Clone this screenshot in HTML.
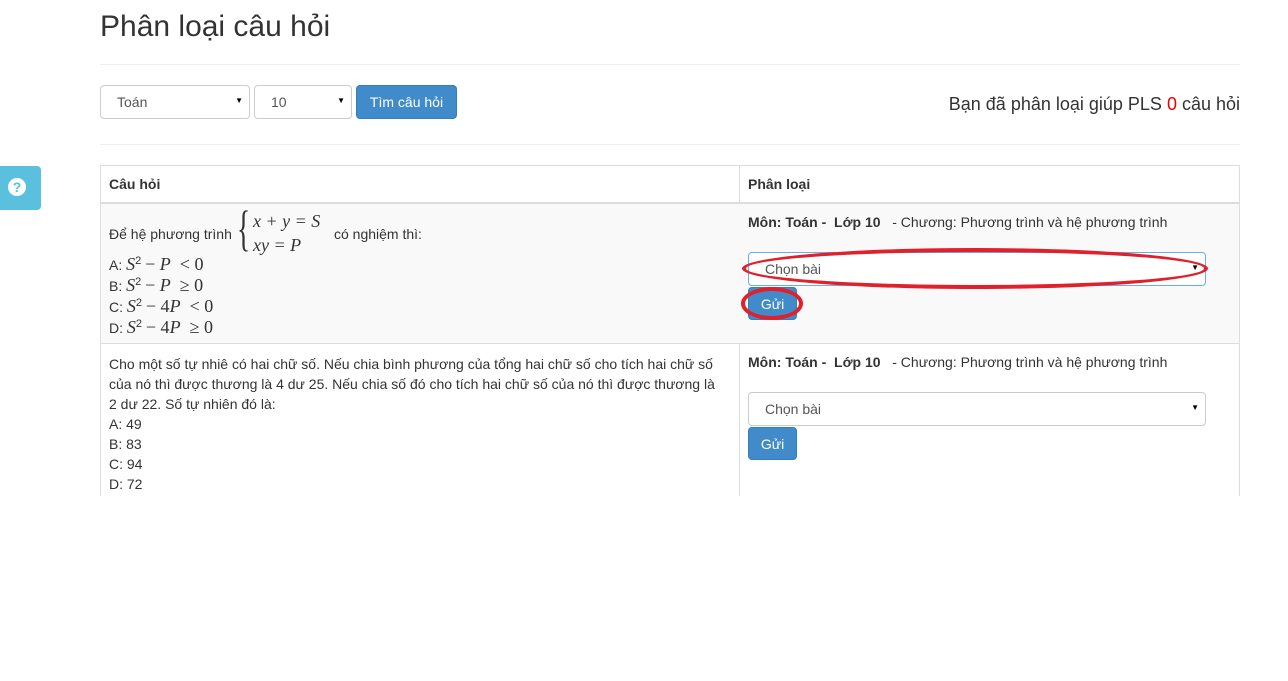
<!DOCTYPE html>
<html><head><meta charset="utf-8"><style>
body{margin:0;width:1288px;height:681px;background:#fff;font-family:"Liberation Sans",sans-serif;color:#333;font-size:14px;position:relative;overflow:hidden}
.a{position:absolute}
.sel{position:absolute;height:32px;border:1px solid #ccc;border-radius:4px;box-sizing:border-box;background:#fff;padding:7px 16px;font-size:14px;color:#555}
.sel:after{content:"▼";position:absolute;right:6px;top:10px;font-size:8px;color:#000}
.btn{position:absolute;background:#428bca;border:1px solid #357ebd;border-radius:4px;color:#fff;box-sizing:border-box;font-size:14px;text-align:center}
.m{font-family:"Liberation Serif",serif;font-style:italic;font-size:18px}
.mr{font-family:"Liberation Serif",serif;font-size:18px}
sup{font-size:11px;line-height:0;vertical-align:6px}
</style></head><body>
<div class="a" style="left:100px;top:10px;font-size:30px;color:#333">Phân loại câu hỏi</div>
<div class="a" style="left:100px;top:64px;width:1140px;border-top:1px solid #eee"></div>
<div class="sel" style="left:100px;top:85px;width:150px;height:34px;padding-top:8px">Toán</div>
<div class="sel" style="left:254px;top:85px;width:98px;height:34px;padding-top:8px">10</div>
<div class="btn" style="left:356px;top:85px;width:101px;height:34px;padding-top:8px">Tìm câu hỏi</div>
<div class="a" style="right:48px;top:94px;font-size:18px">Bạn đã phân loại giúp PLS <span style="color:#e00">0</span> câu hỏi</div>
<div class="a" style="left:100px;top:144px;width:1140px;border-top:1px solid #eee"></div>
<div class="a" style="left:0;top:166px;width:41px;height:44px;background:#5bc0de;border-radius:0 4px 4px 0"><div style="position:absolute;left:8px;top:12px;width:18px;height:18px;border-radius:50%;background:#fff;color:#5bc0de;font-weight:bold;font-size:14px;text-align:center;line-height:18px">?</div></div>
<div class="a" style="left:100px;top:165px;width:1140px;height:331px;border:1px solid #ddd;border-bottom:none;box-sizing:border-box"></div>
<div class="a" style="left:739px;top:165px;height:331px;border-left:1px solid #ddd"></div>
<div class="a" style="left:109px;top:176px;font-weight:bold">Câu hỏi</div>
<div class="a" style="left:748px;top:176px;font-weight:bold">Phân loại</div>
<div class="a" style="left:101px;top:202px;width:1138px;height:139px;background:#f9f9f9;border-top:2px solid #ddd;border-bottom:1px solid #ddd"></div>
<div class="a" style="left:109px;top:226px">Để hệ phương trình</div>
<div class="a" style="left:237px;top:203px;font-size:50px;line-height:50px;font-family:'Liberation Serif',serif;transform:scaleX(.55);transform-origin:left">{</div>
<div class="a m" style="left:253px;top:211px">x + y = S</div>
<div class="a m" style="left:253px;top:235px">xy = P</div>
<div class="a" style="left:334px;top:226px">có nghiệm thì:</div>
<div class="a" style="left:109px;top:254px;line-height:20px">A: <span class="m">S</span><sup>2</sup> <span class="mr">− <i>P</i> &nbsp;&lt; 0</span><br>B: <span class="m">S</span><sup>2</sup> <span class="mr">− <i>P</i> &nbsp;≥ 0</span><br>C: <span class="m">S</span><sup>2</sup> <span class="mr">− 4<i>P</i> &nbsp;&lt; 0</span><br>D: <span class="m">S</span><sup>2</sup> <span class="mr">− 4<i>P</i> &nbsp;≥ 0</span></div>
<div class="a" style="left:748px;top:214px"><b>Môn: Toán - &nbsp;Lớp 10</b> &nbsp; - Chương: Phương trình và hệ phương trình</div>
<div class="sel" style="left:748px;top:252px;width:458px;height:34px;padding-top:8px;border-color:#66afe9">Chọn bài</div>
<div class="btn" style="left:748px;top:287px;width:49px;height:33px;padding-top:8px">Gửi</div>
<div class="a" style="left:742px;top:248px;width:466px;height:41px;border:4px solid #e0202a;border-radius:50%;box-sizing:border-box"></div>
<div class="a" style="left:741px;top:287px;width:62px;height:33px;border:4px solid #e0202a;border-radius:50%;box-sizing:border-box"></div>
<div class="a" style="left:109px;top:354px;width:615px;line-height:20px">Cho một số tự nhiê có hai chữ số. Nếu chia bình phương của tổng hai chữ số cho tích hai chữ số của nó thì được thương là 4 dư 25. Nếu chia số đó cho tích hai chữ số của nó thì được thương là 2 dư 22. Số tự nhiên đó là:<br>A: 49<br>B: 83<br>C: 94<br>D: 72</div>
<div class="a" style="left:748px;top:354px"><b>Môn: Toán - &nbsp;Lớp 10</b> &nbsp; - Chương: Phương trình và hệ phương trình</div>
<div class="sel" style="left:748px;top:392px;width:458px;height:34px;padding-top:8px">Chọn bài</div>
<div class="btn" style="left:748px;top:427px;width:49px;height:33px;padding-top:8px">Gửi</div>
</body></html>
